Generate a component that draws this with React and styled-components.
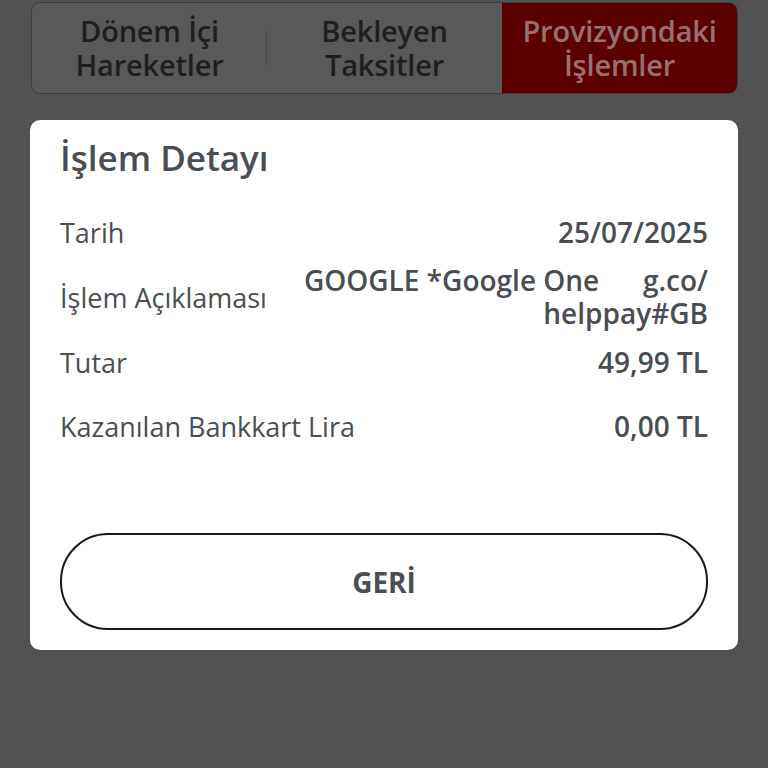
import React from 'react';
import styled, { createGlobalStyle } from 'styled-components';

const GlobalStyle = createGlobalStyle`
  html, body {
    margin: 0;
    padding: 0;
    background: #525252;
  }
  body {
    font-family: 'Open Sans', 'Lato', sans-serif;
  }
`;

const rows = [
  { id: 1, label: 'Tarih', value: '25/07/2025' },
  { id: 2, label: 'İşlem Açıklaması', value: 'GOOGLE *Google One      g.co/\nhelppay#GB' },
  { id: 3, label: 'Tutar', value: '49,99 TL' },
  { id: 4, label: 'Kazanılan Bankkart Lira', value: '0,00 TL' },
];

const tabs = [
  { id: 1, text: 'Dönem İçi\nHareketler' },
  { id: 2, text: 'Bekleyen\nTaksitler' },
  { id: 3, text: 'Provizyondaki\nİşlemler', active: true },
];

const App = () => {
  return (
    <Page>
      <GlobalStyle />
      <TabBar>
        {tabs.map((tab, i) => (
          <Tab key={tab.id} $active={tab.active} $divider={i === 0}>
            {tab.text}
          </Tab>
        ))}
      </TabBar>
      <Card>
        <Title>İşlem Detayı</Title>
        <Rows>
          {rows.map((row) => (
            <Row key={row.id}>
              <Label>{row.label}</Label>
              <Value>{row.value}</Value>
            </Row>
          ))}
        </Rows>
        <BackButton>GERİ</BackButton>
      </Card>
    </Page>
  );
};

const Page = styled.div`
  width: 768px;
  height: 768px;
  background: #525252;
  padding: 2px 30px 0 30px;
  box-sizing: border-box;
  display: flex;
  flex-direction: column;
`;

const TabBar = styled.div`
  display: grid;
  grid-template-columns: repeat(3, 1fr);
  height: 92px;
  margin: 0 0 0 1px;
  border: 1px solid #3c3c3c;
  border-radius: 9px;
  background: #595959;
  overflow: hidden;
  box-sizing: border-box;
`;

const Tab = styled.div`
  display: flex;
  align-items: center;
  justify-content: center;
  text-align: center;
  white-space: pre-line;
  font-size: 29px;
  line-height: 34px;
  font-weight: 600;
  letter-spacing: -0.2px;
  color: ${(p) => (p.$active ? '#987071' : '#1f1f1f')};
  background: ${(p) => (p.$active ? '#5a0000' : 'transparent')};
  position: relative;

  &::after {
    content: '';
    display: ${(p) => (p.$divider ? 'block' : 'none')};
    position: absolute;
    right: 0;
    top: 28px;
    bottom: 28px;
    width: 1px;
    background: #454545;
  }
`;

const Card = styled.div`
  margin-top: 26px;
  background: #fff;
  border-radius: 10px;
  padding: 17px 30px 20px 30px;
  height: 530px;
  box-sizing: border-box;
  display: flex;
  flex-direction: column;
  color: #494e54;
`;

const Title = styled.h2`
  margin: 0;
  font-size: 35px;
  line-height: 42px;
  font-weight: 600;
  color: #494e54;
`;

const Rows = styled.div`
  margin-top: 21px;
  display: flex;
  flex-direction: column;
  flex: 1;
`;

const Row = styled.div`
  display: flex;
  justify-content: space-between;
  align-items: center;
  gap: 30px;
  min-height: 64px;
`;

const Label = styled.span`
  font-size: 27px;
  line-height: 33px;
  font-weight: 400;
  white-space: nowrap;
`;

const Value = styled.span`
  font-size: 28px;
  line-height: 33px;
  font-weight: 600;
  text-align: right;
  white-space: pre;
`;

const BackButton = styled.button`
  height: 97px;
  border: 2px solid #1a1a1a;
  border-radius: 48px;
  background: #fff;
  font-family: 'Open Sans', sans-serif;
  font-size: 28px;
  font-weight: 700;
  color: #494e54;
  margin-bottom: 0;
  cursor: pointer;
`;

export default App;
